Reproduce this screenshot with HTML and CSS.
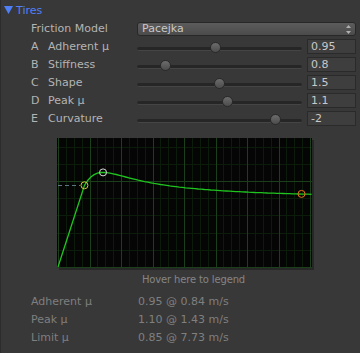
FILE: index.html
```html
<!DOCTYPE html>
<html lang="en">
<head>
  <meta charset="UTF-8">
  <title>Tires</title>
  <link rel="stylesheet" href="styles.css">
</head>
<body>
  <div class="inspector">
    <div class="foldout">
      <svg class="foldout-arrow" width="9" height="8" viewBox="0 0 9 8"><polygon points="0,0 9,0 4.5,8" fill="#4f80f8"/></svg>
      Tires
    </div>

    <div class="fields">
      <div class="row">
        <div class="row-label">Friction Model</div>
        <div class="popup">
          Pacejka
          <svg class="popup-arrows" width="5" height="9" viewBox="0 0 5 9"><polygon points="2.5,0 5,3 0,3" fill="#b0b0b0"/><polygon points="0,6 5,6 2.5,9" fill="#b0b0b0"/></svg>
        </div>
      </div>
      <div class="row">
        <div class="row-label"><span class="key">A</span>Adherent μ</div>
        <div class="slider"><div class="track"></div><div class="thumb" style="left: 73px"></div></div>
        <div class="value">0.95</div>
      </div>
      <div class="row">
        <div class="row-label"><span class="key">B</span>Stiffness</div>
        <div class="slider"><div class="track"></div><div class="thumb" style="left: 23px"></div></div>
        <div class="value">0.8</div>
      </div>
      <div class="row">
        <div class="row-label"><span class="key">C</span>Shape</div>
        <div class="slider"><div class="track"></div><div class="thumb" style="left: 77px"></div></div>
        <div class="value">1.5</div>
      </div>
      <div class="row">
        <div class="row-label"><span class="key">D</span>Peak μ</div>
        <div class="slider"><div class="track"></div><div class="thumb" style="left: 85px"></div></div>
        <div class="value">1.1</div>
      </div>
      <div class="row">
        <div class="row-label"><span class="key">E</span>Curvature</div>
        <div class="slider"><div class="track"></div><div class="thumb" style="left: 133px"></div></div>
        <div class="value">-2</div>
      </div>

      <div class="graph">
        <svg id="curve" width="255" height="130" viewBox="0 0 255 130"></svg>
      </div>
      <div class="hint">Hover here to legend</div>

      <div class="stats">
        <div class="stat"><div class="stat-label">Adherent μ</div><div>0.95 @ 0.84 m/s</div></div>
        <div class="stat"><div class="stat-label">Peak μ</div><div>1.10 @ 1.43 m/s</div></div>
        <div class="stat"><div class="stat-label">Limit μ</div><div>0.85 @ 7.73 m/s</div></div>
      </div>
    </div>
  </div>

  <script>
    (function() {
      const svg = document.getElementById('curve');
      const NS = 'http://www.w3.org/2000/svg';
      const sx = 31.5, sy = 86;
      const X = v => 1 + v * sx;
      const Y = v => 129 - v * sy;

      function el(name, attrs) {
        const node = document.createElementNS(NS, name);
        for (const k in attrs) node.setAttribute(k, attrs[k]);
        svg.appendChild(node);
        return node;
      }

      // Pacejka magic formula with the values above
      function pacejka(x) {
        const b = 0.8, c = 1.5, d = 1.1, e = -2;
        const bx = b * x;
        return d * Math.sin(c * Math.atan(bx - e * (bx - Math.atan(bx))));
      }

      // minor grid
      for (let i = 1; i < 33; i++) {
        if (i % 4 === 0) continue;
        const x = Math.round(X(i * 0.25)) + 0.5;
        el('line', { x1: x, y1: 0, x2: x, y2: 130, class: 'grid-minor' });
      }
      for (let i = 1; i < 8; i++) {
        if (i === 5) continue;
        const y = Math.round(Y(i * 0.2)) + 0.5;
        el('line', { x1: 0, y1: y, x2: 255, y2: y, class: 'grid-minor' });
      }

      // major grid
      for (let i = 0; i <= 8; i++) {
        const x = Math.round(X(i)) + 0.5;
        el('line', { x1: x, y1: 0, x2: x, y2: 130, class: 'grid-major' });
      }
      [0, 1].forEach(function(v) {
        const y = Math.round(Y(v)) + 0.5;
        el('line', { x1: 0, y1: y, x2: 255, y2: y, class: 'grid-major' });
      });

      const adherent = [0.84, 0.95], peak = [1.43, 1.10], limit = [7.73, 0.85];

      el('line', { x1: 1, y1: Math.round(Y(adherent[1])) + 0.5, x2: X(adherent[0]) - 4, y2: Math.round(Y(adherent[1])) + 0.5, class: 'guide' });

      const pts = [[X(0), Y(0)], [X(adherent[0]), Y(adherent[1])]];
      for (let v = 0.95; v <= 8.1; v += 0.1) {
        pts.push([X(v), Y(pacejka(v))]);
      }
      el('polyline', { points: pts.map(p => p[0].toFixed(1) + ',' + p[1].toFixed(1)).join(' '), class: 'curve' });

      el('circle', { cx: X(adherent[0]), cy: Y(adherent[1]), r: 3.5, class: 'mark mark-adherent' });
      el('circle', { cx: X(peak[0]), cy: Y(peak[1]), r: 3.5, class: 'mark mark-peak' });
      el('circle', { cx: X(limit[0]), cy: Y(limit[1]), r: 3.5, class: 'mark mark-limit' });
    })();
  </script>
</body>
</html>
```

FILE: styles.css
```css
body {
  margin: 0;
  background: #383838;
  font-family: "DejaVu Sans", sans-serif;
  font-size: 11px;
  color: #b4b4b4;
}
.inspector {
  height: 353px;
  padding-top: 2px;
  box-sizing: border-box;
  box-shadow: inset 1px 0 0 #2c2c2c;
}
.foldout {
  position: relative;
  height: 18px;
  line-height: 18px;
  padding-left: 16px;
  color: #4f80f8;
}
.foldout-arrow {
  position: absolute;
  left: 4px;
  top: 4px;
}
.fields {
  padding: 0 4px 0 31px;
}
.row {
  display: flex;
  height: 18px;
  line-height: 18px;
}
.row-label {
  width: 106px;
  flex: none;
  white-space: nowrap;
}
.key {
  display: inline-block;
  width: 17px;
}
.popup {
  position: relative;
  flex: 1;
  height: 14px;
  margin-top: 2px;
  padding-left: 4px;
  box-sizing: border-box;
  border: 1px solid #282828;
  border-radius: 3px;
  background: linear-gradient(#5c5c5c, #4b4b4b);
  color: #c8c8c8;
  line-height: 12px;
}
.popup-arrows {
  position: absolute;
  right: 4px;
  top: 2px;
}
.slider {
  position: relative;
  width: 165px;
  flex: none;
}
.track {
  height: 3px;
  margin-top: 9px;
  background: #262626;
  border-bottom: 1px solid #454545;
  border-radius: 2px;
}
.thumb {
  position: absolute;
  top: 4px;
  width: 11px;
  height: 11px;
  box-sizing: border-box;
  border: 1px solid #2a2a2a;
  border-radius: 50%;
  background: linear-gradient(#6c6c6c, #4c4c4c);
}
.value {
  width: 49px;
  height: 15px;
  margin: 1px 0 0 5px;
  padding-left: 3px;
  box-sizing: border-box;
  border: 1px solid #2a2a2a;
  background: #3e3e3e;
  color: #c8c8c8;
  line-height: 13px;
}
.graph {
  width: 255px;
  height: 130px;
  margin: 10px 0 0 26px;
  background: #050505;
  box-shadow: 2px 2px 0 #272727;
}
.graph svg {
  display: block;
}
.grid-minor {
  stroke: #0b1c0b;
  stroke-width: 1;
  shape-rendering: crispEdges;
}
.grid-major {
  stroke: #1a3f1a;
  stroke-width: 1;
  shape-rendering: crispEdges;
}
.guide {
  stroke: #5d7684;
  stroke-width: 1;
  stroke-dasharray: 4 3;
  shape-rendering: crispEdges;
}
.curve {
  fill: none;
  stroke: #1fc41f;
  stroke-width: 1.3;
}
.mark {
  fill: none;
  stroke-width: 1;
}
.mark-adherent {
  stroke: #c8c83a;
}
.mark-peak {
  stroke: #d8d8d8;
}
.mark-limit {
  stroke: #e8701c;
}
.hint {
  margin-top: 5px;
  font-size: 10px;
  line-height: 14px;
  letter-spacing: -0.15px;
  text-align: center;
  color: #858585;
}
.stats {
  margin-top: 6px;
}
.stat {
  display: flex;
  height: 18px;
  line-height: 18px;
  color: #7f7f7f;
}
.stat-label {
  width: 107px;
  flex: none;
}
```
